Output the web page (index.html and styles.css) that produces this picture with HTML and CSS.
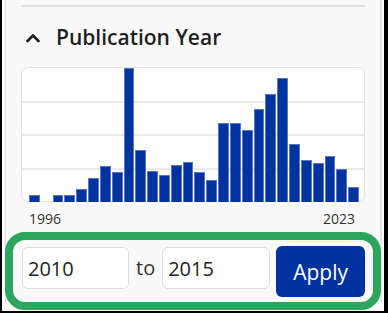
FILE: index.html
```html
<!DOCTYPE html>
<html>
<head>
<meta charset="utf-8">
<link rel="stylesheet" href="styles.css">
</head>
<body>
<div class="frame">
  <div class="panel">
    <div class="divider"></div>
    <div class="facet-head">
      <svg class="chev" width="14" height="10" viewBox="0 0 14 10"><path d="M1.5 8 L7 2.5 L12.5 8" fill="none" stroke="#1f1f1f" stroke-width="2.6" stroke-linecap="round" stroke-linejoin="round"/></svg>
      <span class="facet-title">Publication Year</span>
    </div>
    <div class="chart">
      <div class="grid-line g1"></div>
      <div class="grid-line g2"></div>
      <div class="grid-line g3"></div>
      <div class="bars">
        <div class="bar" style="height:7px"></div>
        <div class="bar empty"></div>
        <div class="bar" style="height:7px"></div>
        <div class="bar" style="height:7px"></div>
        <div class="bar" style="height:13px"></div>
        <div class="bar" style="height:24px"></div>
        <div class="bar" style="height:36px"></div>
        <div class="bar" style="height:30px"></div>
        <div class="bar" style="height:134px"></div>
        <div class="bar" style="height:52px"></div>
        <div class="bar" style="height:31px"></div>
        <div class="bar" style="height:27px"></div>
        <div class="bar" style="height:37px"></div>
        <div class="bar" style="height:40px"></div>
        <div class="bar" style="height:30px"></div>
        <div class="bar" style="height:22px"></div>
        <div class="bar" style="height:79px"></div>
        <div class="bar" style="height:79px"></div>
        <div class="bar" style="height:72px"></div>
        <div class="bar" style="height:93px"></div>
        <div class="bar" style="height:108px"></div>
        <div class="bar" style="height:124px"></div>
        <div class="bar" style="height:58px"></div>
        <div class="bar" style="height:42px"></div>
        <div class="bar" style="height:39px"></div>
        <div class="bar" style="height:46px"></div>
        <div class="bar" style="height:33px"></div>
        <div class="bar" style="height:15px"></div>
      </div>
    </div>
    <div class="axis">
      <span>1996</span>
      <span>2023</span>
    </div>
    <form class="range">
      <input class="year-input" type="text" value="2010">
      <span class="to">to</span>
      <input class="year-input wide" type="text" value="2015">
      <button class="apply" type="button">Apply</button>
    </form>
  </div>
</div>
</body>
</html>
```

FILE: styles.css
```css
* { box-sizing: border-box; }
html, body { margin: 0; padding: 0; background: #fff; }
body { font-family: "Open Sans", "Noto Sans", sans-serif; color: #222; }

.frame {
  width: 388px;
  height: 313px;
  background: #fff;
  border-left: 2px solid #000;
  border-right: 4px solid #000;
  border-bottom: 2px solid #000;
  overflow: hidden;
}

.panel {
  margin-left: 3px;
  width: 377px;
  height: 302px;
  background: #f9f9f9;
  border-left: 1px solid #dedede;
  border-right: 2px solid #e6e6e6;
  padding: 0 15px 0 15px;
  display: flex;
  flex-direction: column;
}

.divider {
  margin-top: 5px;
  height: 2px;
  background: #e1e1e1;
}

.facet-head {
  margin-top: 16px;
  height: 28px;
  display: flex;
  align-items: center;
}
.chev { margin-left: 5px; margin-top: 2px; }
.facet-title {
  margin-left: 16px;
  font-size: 21px;
  font-weight: 600;
  line-height: 28px;
  color: #1f1f1f;
}

.chart {
  margin-top: 16px;
  height: 135px;
  background: #fff;
  border: 1px solid #e3e3e3;
  border-radius: 7px;
  position: relative;
}
.grid-line {
  position: absolute;
  left: 0;
  right: 0;
  height: 2px;
  background: #ebebeb;
}
.g1 { top: 33px; }
.g2 { top: 66px; }
.g3 { top: 100px; }

.bars {
  position: absolute;
  left: 7px;
  right: 5px;
  bottom: 0;
  top: 0;
  display: grid;
  grid-template-columns: repeat(28, 1fr);
  column-gap: 1px;
  align-items: end;
}
.bar {
  background: #0033a0;
  border: 1px solid #5a78c0;
  border-bottom: none;
}
.bar.empty {
  height: 0;
  border: none;
}

.axis {
  margin-top: 7px;
  display: flex;
  justify-content: space-between;
  padding: 0 10px 0 8px;
  font-size: 14px;
  line-height: 19px;
  color: #333;
}

.range {
  margin: 12px -8px 0 -8px;
  height: 62px;
  border-radius: 12px;
  outline: 8px solid #2ea55d;
  display: flex;
  align-items: flex-start;
  padding: 6px 8px 0 9px;
}
.year-input {
  margin-top: 1px;
  width: 107px;
  height: 42px;
  border: 1px solid #dcdcdc;
  border-radius: 6px;
  background: #fff;
  padding: 0 0 0 5px;
  font-family: "Open Sans", sans-serif;
  font-size: 20px;
  color: #222;
}
.year-input.wide { width: 108px; }
.to {
  margin: 1px 7px 0 7px;
  height: 42px;
  line-height: 42px;
  font-size: 20px;
  color: #333;
}
.apply {
  margin-left: 6px;
  width: 89px;
  height: 51px;
  border: none;
  border-radius: 6px;
  background: #0033a0;
  color: #fff;
  font-family: "Open Sans", sans-serif;
  font-size: 21px;
  padding: 0;
}
```
